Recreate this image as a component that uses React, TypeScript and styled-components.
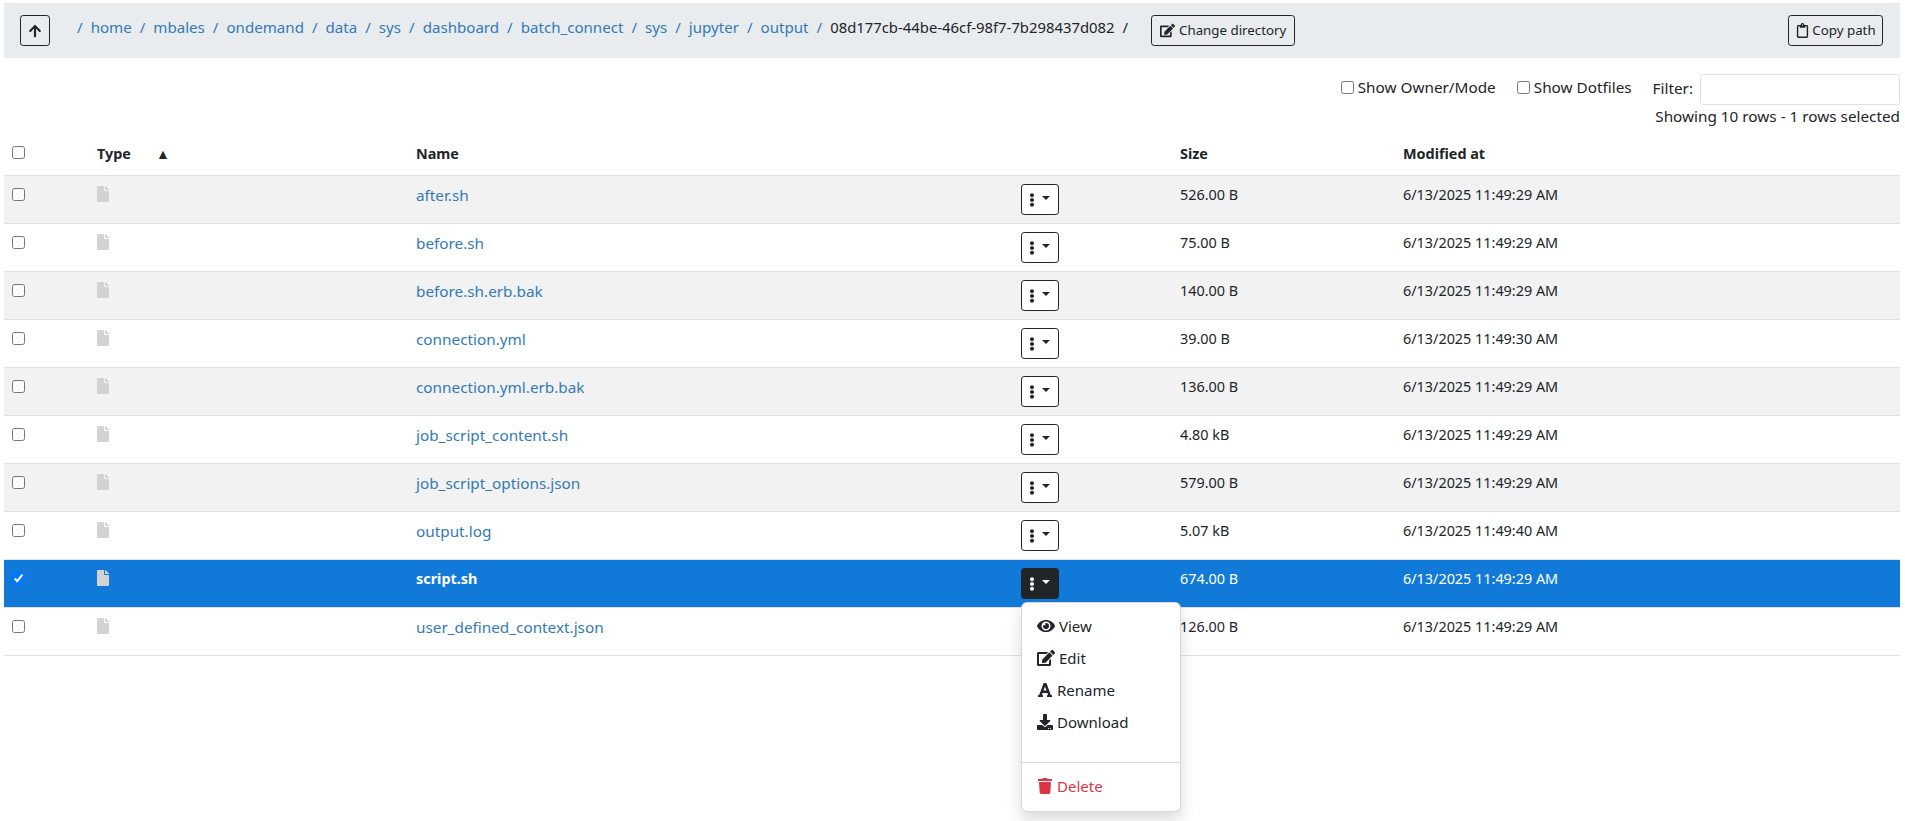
import React from 'react'
import styled, { createGlobalStyle } from 'styled-components'
import {
  FaArrowUp,
  FaDownload,
  FaEdit,
  FaEllipsisV,
  FaEye,
  FaFile,
  FaFont,
  FaRegClipboard,
  FaTrash,
} from 'react-icons/fa'

const GlobalStyle = createGlobalStyle`
  html, body {
    margin: 0;
    background: #fff;
  }
  body {
    font-family: "Noto Sans", "Liberation Sans", sans-serif;
    font-size: 14.4px;
    line-height: 24px;
    color: #212529;
  }
`

const crumbs = [
  'home',
  'mbales',
  'ondemand',
  'data',
  'sys',
  'dashboard',
  'batch_connect',
  'sys',
  'jupyter',
  'output',
]

const files = [
  { name: 'after.sh', size: '526.00 B', date: '6/13/2025 11:49:29 AM' },
  { name: 'before.sh', size: '75.00 B', date: '6/13/2025 11:49:29 AM' },
  { name: 'before.sh.erb.bak', size: '140.00 B', date: '6/13/2025 11:49:29 AM' },
  { name: 'connection.yml', size: '39.00 B', date: '6/13/2025 11:49:30 AM' },
  { name: 'connection.yml.erb.bak', size: '136.00 B', date: '6/13/2025 11:49:29 AM' },
  { name: 'job_script_content.sh', size: '4.80 kB', date: '6/13/2025 11:49:29 AM' },
  { name: 'job_script_options.json', size: '579.00 B', date: '6/13/2025 11:49:29 AM' },
  { name: 'output.log', size: '5.07 kB', date: '6/13/2025 11:49:40 AM' },
  { name: 'script.sh', size: '674.00 B', date: '6/13/2025 11:49:29 AM', selected: true },
  { name: 'user_defined_context.json', size: '126.00 B', date: '6/13/2025 11:49:29 AM' },
]

const App = () => {
  return (
    <Page>
      <GlobalStyle />
      <PathBar>
        <OutlineButton $square>
          <FaArrowUp size={14} />
        </OutlineButton>
        <Crumbs>
          <Slash />
          {crumbs.map((c, i) => (
            <React.Fragment key={i}>
              <CrumbLink>{c}</CrumbLink>
              <Slash />
            </React.Fragment>
          ))}
          <CrumbCurrent>08d177cb-44be-46cf-98f7-7b298437d082</CrumbCurrent>
          <Slash $dark />
        </Crumbs>
        <OutlineButton>
          <FaEdit size={15} />
          <ButtonText>Change directory</ButtonText>
        </OutlineButton>
        <CopyButton>
          <FaRegClipboard size={15} />
          <ButtonText>Copy path</ButtonText>
        </CopyButton>
      </PathBar>

      <Controls>
        <CheckLabel>
          <input type="checkbox" />
          Show Owner/Mode
        </CheckLabel>
        <CheckLabel>
          <input type="checkbox" />
          Show Dotfiles
        </CheckLabel>
        <FilterLabel>
          <FilterText>Filter:</FilterText>
          <FilterInput type="text" />
        </FilterLabel>
      </Controls>
      <RowInfo>Showing 10 rows - 1 rows selected</RowInfo>

      <FileTable>
        <colgroup>
          <col style={{ width: 85 }} />
          <col style={{ width: 319 }} />
          <col style={{ width: 605 }} />
          <col style={{ width: 159 }} />
          <col style={{ width: 223 }} />
          <col />
        </colgroup>
        <thead>
          <tr>
            <HeadCell>
              <input type="checkbox" />
            </HeadCell>
            <HeadCell>
              Type
              <SortMark>▲</SortMark>
            </HeadCell>
            <HeadCell>Name</HeadCell>
            <HeadCell />
            <HeadCell>Size</HeadCell>
            <HeadCell>Modified at</HeadCell>
          </tr>
        </thead>
        <tbody>
          {files.map((f, i) => (
            <FileRow key={f.name} $odd={i % 2 === 0} $selected={!!f.selected}>
              <td>
                <input type="checkbox" defaultChecked={!!f.selected} />
              </td>
              <td>
                <FileIcon size={16} />
              </td>
              <td>
                <CellText>
                  <FileName $selected={!!f.selected}>{f.name}</FileName>
                </CellText>
              </td>
              <td>
                <MenuAnchor>
                  <ActionButton $selected={!!f.selected}>
                    <FaEllipsisV size={14} />
                    <Caret />
                  </ActionButton>
                  {f.selected && (
                    <Menu>
                      <MenuItem>
                        <FaEye size={18} />
                        View
                      </MenuItem>
                      <MenuItem>
                        <FaEdit size={18} />
                        Edit
                      </MenuItem>
                      <MenuItem>
                        <FaFont size={16} />
                        Rename
                      </MenuItem>
                      <MenuItem>
                        <FaDownload size={16} />
                        Download
                      </MenuItem>
                      <MenuSpacer />
                      <MenuDivider />
                      <MenuItem $danger>
                        <FaTrash size={16} />
                        Delete
                      </MenuItem>
                    </Menu>
                  )}
                </MenuAnchor>
              </td>
              <td>
                <CellText>{f.size}</CellText>
              </td>
              <td>
                <CellText>{f.date}</CellText>
              </td>
            </FileRow>
          ))}
        </tbody>
      </FileTable>
    </Page>
  )
}

export default App

const Page = styled.div`
  box-sizing: border-box;
  min-height: 100vh;
  padding: 3px 5px 0 4px;
`

const PathBar = styled.div`
  display: flex;
  align-items: center;
  height: 55px;
  padding: 0 17px 0 16px;
  background: #e9ecef;
`

const OutlineButton = styled.button<{ $square?: boolean }>`
  display: inline-flex;
  align-items: center;
  justify-content: center;
  gap: 4px;
  height: 31px;
  width: ${(p) => (p.$square ? '30px' : '144px')};
  padding: 0;
  font: inherit;
  font-size: 13.3px;
  color: #212529;
  background: transparent;
  border: 1px solid #212529;
  border-radius: 3.2px;
  flex-shrink: 0;
`

const ButtonText = styled.span`
  padding-bottom: 2px;
`

const CopyButton = styled(OutlineButton)`
  width: 95px;
  margin-left: auto;
  gap: 2px;
`

const Crumbs = styled.div`
  display: flex;
  align-items: center;
  padding-left: 19px;
  margin-right: 15px;
  margin-bottom: 7px;
  font-size: 15.1px;
  white-space: nowrap;
`

const CrumbLink = styled.a`
  color: #337ab7;
`

const CrumbCurrent = styled.span`
  font-size: 14.85px;
  color: #212529;
`

const Slash = styled.span<{ $dark?: boolean }>`
  color: ${(p) => (p.$dark ? '#212529' : '#337ab7')};
  margin: 0 8px;
  &::before {
    content: '/';
  }
`

const Controls = styled.div`
  display: flex;
  justify-content: flex-end;
  align-items: center;
  height: 31px;
  margin-top: 16px;
  font-size: 15.3px;
`

const CheckLabel = styled.label`
  display: flex;
  align-items: center;
  margin-right: 21px;
  padding-bottom: 5px;
  input {
    margin: 0 4px 0 0;
  }
`

const FilterLabel = styled.label`
  display: flex;
  align-items: center;
  gap: 7px;
`

const FilterText = styled.span`
  padding-bottom: 4px;
`

const FilterInput = styled.input`
  box-sizing: border-box;
  width: 200px;
  height: 31px;
  background: #fff;
  border: 1px solid #dee2e6;
  border-radius: 3.2px;
`

const RowInfo = styled.div`
  height: 24px;
  font-size: 15.3px;
  line-height: 22px;
  text-align: right;
`

const FileTable = styled.table`
  width: 100%;
  margin-top: 9px;
  table-layout: fixed;
  border-collapse: collapse;
`

const HeadCell = styled.th`
  height: 36px;
  padding: 4px 8px 9px;
  box-sizing: border-box;
  font-weight: 700;
  text-align: left;
  vertical-align: middle;
  border-bottom: 1px solid #dee2e6;
  input {
    display: block;
    margin: 0 0 4px;
  }
`

const SortMark = styled.span`
  margin-left: 25px;
  font-size: 14px;
`

const FileRow = styled.tr<{ $odd: boolean; $selected: boolean }>`
  background: ${(p) => (p.$selected ? '#117ad9' : p.$odd ? '#f2f2f2' : '#fff')};
  color: ${(p) => (p.$selected ? '#fff' : '#212529')};
  td {
    height: 47px;
    padding: 8px;
    box-sizing: border-box;
    vertical-align: top;
    border-bottom: 1px solid #dee2e6;
  }
  input {
    display: block;
    margin: 4px 0 0;
  }
`

const CellText = styled.div`
  margin-top: -1px;
`

const FileIcon = styled(FaFile)`
  display: block;
  margin: 2px 0 0 -2px;
  color: lightgrey;
`

const FileName = styled.a<{ $selected: boolean }>`
  color: ${(p) => (p.$selected ? '#fff' : '#337ab7')};
  font-size: ${(p) => (p.$selected ? '14.4px' : '15.3px')};
  font-weight: ${(p) => (p.$selected ? 700 : 400)};
`

const MenuAnchor = styled.div`
  position: relative;
  width: 38px;
`

const ActionButton = styled.button<{ $selected: boolean }>`
  display: flex;
  align-items: center;
  gap: 3px;
  width: 38px;
  height: 31px;
  padding: 0 0 0 3px;
  color: ${(p) => (p.$selected ? '#fff' : '#212529')};
  background: ${(p) => (p.$selected ? '#212529' : '#fff')};
  border: 1px solid #212529;
  border-radius: 3.2px;
`

const Caret = styled.span`
  width: 0;
  height: 0;
  margin-bottom: 3px;
  border-top: 4px solid currentColor;
  border-left: 4px solid transparent;
  border-right: 4px solid transparent;
`

const Menu = styled.div`
  position: absolute;
  top: 34px;
  left: 0;
  z-index: 2;
  box-sizing: border-box;
  width: 160px;
  padding: 8px 0;
  font-size: 15px;
  color: #212529;
  background: #fff;
  border: 1px solid rgba(0, 0, 0, 0.15);
  border-radius: 6px;
  box-shadow: 0 8px 16px rgba(0, 0, 0, 0.15);
`

const MenuItem = styled.div<{ $danger?: boolean }>`
  display: flex;
  align-items: center;
  gap: 4px;
  box-sizing: border-box;
  height: 32px;
  padding: 0 15px 3px;
  color: ${(p) => (p.$danger ? '#dc3545' : '#212529')};
`

const MenuSpacer = styled.div`
  height: 15px;
`

const MenuDivider = styled.div`
  margin: 8px 0;
  border-top: 1px solid rgba(0, 0, 0, 0.15);
`
